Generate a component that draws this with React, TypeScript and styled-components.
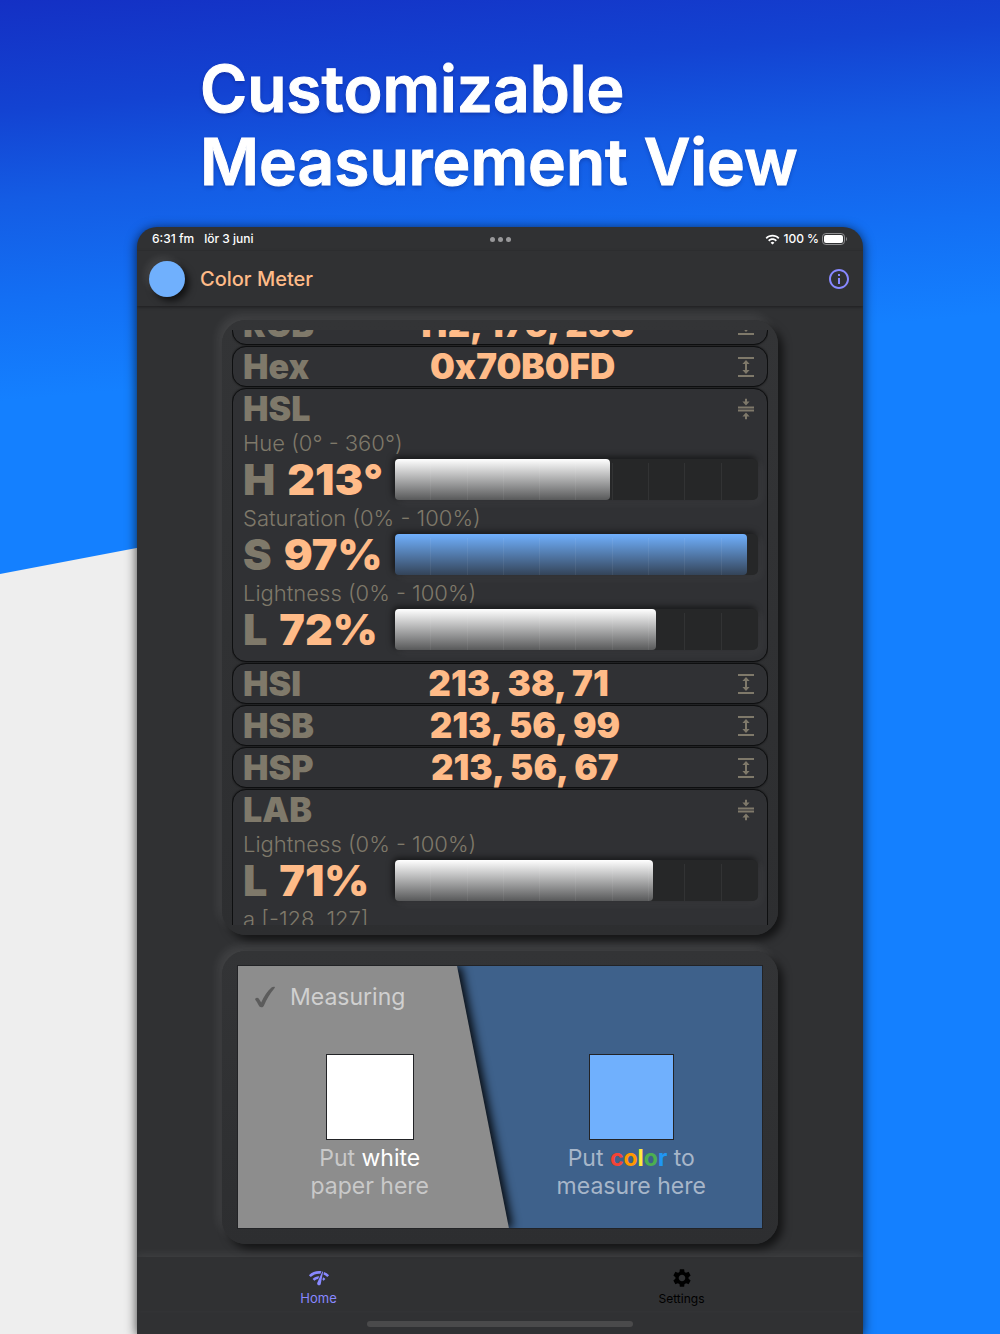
import React, { useLayoutEffect, useRef } from 'react';
import styled, { createGlobalStyle } from 'styled-components';
import { MdNetworkCheck, MdSettings, MdInfoOutline, MdWifi } from 'react-icons/md';

const c = {
  surface: '#303133',
  accent: '#ffbb88',
  muted: '#7f796a',
  violet: '#8888ff',
  sample: '#70b0fd',
};

const Global = createGlobalStyle`
  *, *::before, *::after { box-sizing: border-box; }
  body { margin: 0; font-family: Inter, "Liberation Sans", sans-serif; }
  button { font: inherit; border: 0; padding: 0; background: none; cursor: pointer; }
`;

const Page = styled.div`
  display: flex;
  flex-direction: column;
  height: 100vh;
  min-height: 1100px;
  overflow: hidden;
  position: relative;
  isolation: isolate;
  background: linear-gradient(175deg, #1430c4 0, #1343d2 110px, #145ce4 200px, #136ff4 300px, #1480ff 400px);
`;

const Slope = styled.div`
  position: absolute;
  inset: 0;
  z-index: -1;
  background: #eeeeee;
  clip-path: polygon(0 574px, 500px 479px, 500px 100%, 0 100%);
`;

const Title = styled.h1`
  width: 100%;
  max-width: 600px;
  margin: 0 auto;
  padding: 52px 0 29px;
  color: #fff;
  font-size: 64px;
  font-weight: 600;
  line-height: 73px;
  white-space: nowrap;
  -webkit-text-stroke: 1px #fff;
  text-shadow: 0 2px 4px rgba(0, 0, 60, 0.3);
`;

const Device = styled.div`
  display: flex;
  flex: 1;
  flex-direction: column;
  width: 100%;
  max-width: 726px;
  min-height: 0;
  margin: 0 auto;
  overflow: hidden;
  border-radius: 20px 20px 0 0;
  background: ${c.surface};
  box-shadow: 0 2px 12px rgba(0, 0, 0, 0.75);
`;

const StatusBar = styled.div`
  display: grid;
  grid-template-columns: 1fr auto 1fr;
  align-items: center;
  height: 24px;
  padding: 0 15px;
  color: #fff;
  font-size: 12px;
  font-weight: 500;
  line-height: 16px;
`;

const StatusGroup = styled.div<{ $end?: boolean }>`
  display: flex;
  align-items: center;
  justify-content: ${(p) => (p.$end ? 'flex-end' : 'flex-start')};
  gap: ${(p) => (p.$end ? 3 : 10)}px;
`;

const Dots = styled.div`
  display: flex;
  gap: 3px;
`;
const Dot = styled.span`
  width: 5px;
  height: 5px;
  border-radius: 50%;
  background: #98989a;
`;

const AppBar = styled.header`
  display: flex;
  align-items: center;
  gap: 15px;
  height: 55px;
  padding: 0 12px;
  box-shadow: 0 1px 3px rgba(0, 0, 0, 0.4);
`;
const Swatch = styled.div`
  width: 36px;
  height: 36px;
  border-radius: 50%;
  background: ${c.sample};
  box-shadow: 4px 4px 7px rgba(0, 0, 0, 0.65), -4px -4px 7px rgba(255, 255, 255, 0.08);
`;
const AppName = styled.h2`
  flex: 1;
  margin: 0;
  color: ${c.accent};
  font-size: 20px;
  font-weight: 500;
  line-height: 24px;
`;
const InfoButton = styled.button`
  display: flex;
  color: ${c.violet};
`;

const Main = styled.main`
  display: flex;
  flex: 1;
  flex-direction: column;
  align-items: center;
  gap: 16px;
  min-height: 0;
  padding: 14px 16px 13px;
`;

const Panel = styled.section<{ $grow?: boolean }>`
  display: flex;
  flex: ${(p) => (p.$grow ? '1 1 0' : 'none')};
  flex-direction: column;
  width: 100%;
  max-width: 556px;
  min-height: 0;
  padding: ${(p) => (p.$grow ? '10px' : '15px 16px 16px')};
  border-radius: 24px;
  background: linear-gradient(#333436, #2d2e30);
  box-shadow: 5px 5px 8px rgba(0, 0, 0, 0.6), -4px -5px 10px rgba(255, 255, 255, 0.09);
`;

const Scroller = styled.div`
  flex: 1;
  min-height: 0;
  overflow-y: auto;
  scrollbar-width: none;
`;
const List = styled.div`
  display: flex;
  flex-direction: column;
  gap: 1px;
`;

const Card = styled.article`
  flex: none;
  border: 1px solid #0e0f10;
  border-radius: 14px;
  background: #303134;
  box-shadow: 0 0 2px rgba(0, 0, 0, 0.6);
`;
const CardHead = styled.div`
  display: flex;
  align-items: center;
  height: 39px;
  padding: 0 11px 0 10px;
`;
const Name = styled.h3`
  margin: 0;
  color: ${c.muted};
  font-size: 34px;
  font-weight: 900;
  line-height: 39px;
`;
const Value = styled.div`
  flex: 1;
  color: ${c.accent};
  font-size: 35px;
  font-weight: 900;
  line-height: 39px;
  text-align: center;
  white-space: nowrap;
`;
const Toggle = styled.button`
  display: flex;
  color: ${c.muted};
`;

const Channels = styled.div`
  padding: 0 9px 8px 10px;
`;
const Caption = styled.div`
  height: 28px;
  color: ${c.muted};
  font-size: 22px;
  font-weight: 300;
  line-height: 30px;
`;
const Channel = styled.div`
  display: grid;
  grid-template-columns: 152px 1fr;
  align-items: center;
  height: 47px;
`;
const Reading = styled.div`
  display: flex;
  gap: 12px;
  color: ${c.accent};
  font-size: 43px;
  font-weight: 900;
  line-height: 47px;
  white-space: nowrap;
`;
const Letter = styled.span`
  color: ${c.muted};
`;
const Track = styled.div`
  position: relative;
  height: 41px;
  border-radius: 5px;
  background: #262728;
  box-shadow: 3px 3px 8px rgba(255, 255, 255, 0.06), -2px -2px 6px rgba(0, 0, 0, 0.6);
`;
const Fill = styled.div<{ $color: string; $end: string }>`
  height: 41px;
  border-radius: 4px;
  background: linear-gradient(${(p) => p.$color}, ${(p) => p.$end});
`;
const Ticks = styled.div`
  position: absolute;
  inset: 4px 0 0;
  display: grid;
  grid-template-columns: repeat(10, 1fr);
`;
const Tick = styled.i`
  border-right: 1px solid rgba(255, 255, 255, 0.06);
  &:last-child { border: 0; }
`;

const Stage = styled.div`
  position: relative;
  display: grid;
  grid-template-columns: 1fr 1fr;
  height: 262px;
  padding-left: 1px;
  isolation: isolate;
  overflow: hidden;
  background: #3e618b;
  outline: 1px solid #222326;
`;
const PaperShadow = styled.div`
  position: absolute;
  inset: 0;
  z-index: -1;
  filter: drop-shadow(4px 0 5px rgba(0, 0, 0, 0.9));
`;
const Paper = styled.div`
  height: 100%;
  background: #8d8d8d;
  clip-path: polygon(0 0, 41.8% 0, 51.7% 100%, 0 100%);
`;
const Half = styled.div`
  display: flex;
  flex-direction: column;
  align-items: center;
`;
const State = styled.div`
  display: flex;
  align-items: center;
  align-self: flex-start;
  gap: 14px;
  height: 62px;
  padding-left: 15px;
  color: #d0d0d0;
  font-size: 23px;
  line-height: 28px;
`;
const StateSpace = styled.div`
  height: 62px;
`;
const Sample = styled.div<{ $color: string; $width: number }>`
  width: ${(p) => p.$width}px;
  height: 86px;
  margin-top: 26px;
  border: 1px solid #222326;
  background: ${(p) => p.$color};
`;
const Hint = styled.p<{ $color: string }>`
  margin: 4px 0 0;
  color: ${(p) => p.$color};
  font-size: 23px;
  line-height: 28px;
  text-align: center;
`;
const Ink = styled.span<{ $color: string; $bold?: boolean }>`
  color: ${(p) => p.$color};
  font-weight: ${(p) => (p.$bold ? 700 : 400)};
`;

const TabBar = styled.nav`
  display: grid;
  grid-template-columns: 1fr 1fr;
  height: 54px;
  box-shadow: 0 -3px 8px rgba(255, 255, 255, 0.07);
`;
const Tab = styled.button<{ $active?: boolean }>`
  display: flex;
  flex-direction: column;
  align-items: center;
  gap: ${(p) => (p.$active ? 1 : 2)}px;
  padding-top: 10px;
  color: ${(p) => (p.$active ? c.violet : '#000')};
  font-size: ${(p) => (p.$active ? 13 : 12)}px;
  line-height: 16px;
`;
const HomeStrip = styled.div`
  height: 23px;
  padding-top: 10px;
`;
const HomeIndicator = styled.div`
  width: 266px;
  height: 6px;
  margin: 0 auto;
  border-radius: 3px;
  background: #4a4a4b;
`;

const ExpandIcon = () => (
  <svg width="20" height="22" viewBox="0 0 20 22" fill="none" stroke="currentColor" aria-hidden="true">
    <path d="M2 2h16M2 20h16" strokeWidth="2" />
    <path d="M10 7v8" strokeWidth="2" />
    <path d="M10 4l3.6 4H6.4zM10 18l3.6-4H6.4z" fill="currentColor" stroke="none" />
  </svg>
);
const CollapseIcon = () => (
  <svg width="20" height="22" viewBox="0 0 20 22" fill="none" stroke="currentColor" aria-hidden="true">
    <path d="M2 9.4h16M2 12.6h16" strokeWidth="2" />
    <path d="M10 .8v4M10 21.2v-4" strokeWidth="2" />
    <path d="M10 7.6l3.6-4H6.4zM10 14.4l3.6 4H6.4z" fill="currentColor" stroke="none" />
  </svg>
);
const BatteryIcon = () => (
  <svg width="26" height="12" viewBox="0 0 26 12" aria-hidden="true">
    <rect x="0.5" y="0.5" width="22" height="11" rx="3.4" fill="none" stroke="#8e8e90" />
    <rect x="2" y="2" width="19" height="8" rx="2" fill="#fff" />
    <path d="M24 4v4c1.3-.5 1.3-3.5 0-4z" fill="#8e8e90" />
  </svg>
);
const CheckIcon = () => (
  <svg width="22" height="22" viewBox="0 0 22 22" aria-hidden="true">
    <path
      d="M1.2 12.8c.8-1.3 2.6-1.6 3.5-.4.9 1.1 1.7 2.6 2.5 4.1C10 10.5 13.3 5 17.5 1.5c.9-.7 2.7-1 3.3-.5.3.4-.1.9-.5 1.4C15.8 7.500 12.600 13.500 10 19.500c-.6 1.400-1.300 1.800-2.600 1.800-1.500 0-2-.6-2.600-1.700-1-1.900-1.900-3.900-3.200-5.400-.4-.5-.6-1-.4-1.400z"
      fill="#5c5c5c"
    />
  </svg>
);

interface ChannelData {
  caption: string;
  letter?: string;
  reading?: string;
  percent: number;
  blue?: boolean;
}
interface Space {
  name: string;
  value?: string;
  channels?: ChannelData[];
}

const spaces: Space[] = [
  { name: 'RGB', value: '112, 176, 253' },
  { name: 'Hex', value: '0x70B0FD' },
  {
    name: 'HSL',
    channels: [
      { caption: 'Hue (0° - 360°)', letter: 'H', reading: '213°', percent: 59.2 },
      { caption: 'Saturation (0% - 100%)', letter: 'S', reading: '97%', percent: 97, blue: true },
      { caption: 'Lightness (0% - 100%)', letter: 'L', reading: '72%', percent: 72 },
    ],
  },
  { name: 'HSI', value: '213, 38, 71' },
  { name: 'HSB', value: '213, 56, 99' },
  { name: 'HSP', value: '213, 56, 67' },
  {
    name: 'LAB',
    channels: [
      { caption: 'Lightness (0% - 100%)', letter: 'L', reading: '71%', percent: 71 },
      { caption: 'a [-128, 127]', percent: 0 },
    ],
  },
];

const SpaceCard = ({ space }: { space: Space }) => (
  <Card>
    <CardHead>
      <Name>{space.name}</Name>
      <Value>{space.value}</Value>
      <Toggle aria-label={`${space.channels ? 'Collapse' : 'Expand'} ${space.name}`}>
        {space.channels ? <CollapseIcon /> : <ExpandIcon />}
      </Toggle>
    </CardHead>
    {space.channels && (
      <Channels>
        {space.channels.map((ch) => (
          <React.Fragment key={ch.caption}>
            <Caption>{ch.caption}</Caption>
            {ch.reading && (
              <Channel>
                <Reading>
                  <Letter>{ch.letter}</Letter>
                  <span>{ch.reading}</span>
                </Reading>
                <Track>
                  <Fill
                    $color={ch.blue ? c.sample : '#ffffff'}
                    $end={ch.blue ? '#344459' : '#58595a'}
                    style={{ width: `${ch.percent}%` }}
                  />
                  <Ticks>
                    {Array.from({ length: 10 }, (_, i) => (
                      <Tick key={i} />
                    ))}
                  </Ticks>
                </Track>
              </Channel>
            )}
          </React.Fragment>
        ))}
      </Channels>
    )}
  </Card>
);

const rainbow: [string, string][] = [
  ['c', '#f44336'],
  ['o', '#ff9800'],
  ['l', '#ffeb3b'],
  ['o', '#4caf50'],
  ['r', '#2196f3'],
];

export default function App() {
  const scroller = useRef<HTMLDivElement>(null);
  useLayoutEffect(() => {
    if (scroller.current) scroller.current.scrollTop = 26;
  }, []);

  return (
    <Page>
      <Global />
      <Slope />
      <Title>
        Customizable
        <br />
        Measurement View
      </Title>
      <Device>
        <StatusBar>
          <StatusGroup>
            <span>6:31 fm</span>
            <span>lör 3 juni</span>
          </StatusGroup>
          <Dots>
            <Dot />
            <Dot />
            <Dot />
          </Dots>
          <StatusGroup $end>
            <MdWifi size={15} />
            <span>100 %</span>
            <BatteryIcon />
          </StatusGroup>
        </StatusBar>
        <AppBar>
          <Swatch />
          <AppName>Color Meter</AppName>
          <InfoButton aria-label="About">
            <MdInfoOutline size={24} />
          </InfoButton>
        </AppBar>
        <Main>
          <Panel $grow>
            <Scroller ref={scroller}>
              <List>
                {spaces.map((s) => (
                  <SpaceCard key={s.name} space={s} />
                ))}
              </List>
            </Scroller>
          </Panel>
          <Panel>
            <Stage>
              <PaperShadow>
                <Paper />
              </PaperShadow>
              <Half>
                <State>
                  <CheckIcon />
                  <span>Measuring</span>
                </State>
                <Sample $color="#ffffff" $width={88} />
                <Hint $color="#c9c9c9">
                  Put <Ink $color="#ffffff">white</Ink>
                  <br />
                  paper here
                </Hint>
              </Half>
              <Half>
                <StateSpace />
                <Sample $color={c.sample} $width={85} />
                <Hint $color="#a7b6c9">
                  Put{' '}
                  {rainbow.map(([ch, color], i) => (
                    <Ink key={i} $color={color} $bold>
                      {ch}
                    </Ink>
                  ))}{' '}
                  to
                  <br />
                  measure here
                </Hint>
              </Half>
            </Stage>
          </Panel>
        </Main>
        <TabBar>
          <Tab $active>
            <MdNetworkCheck size={22} />
            Home
          </Tab>
          <Tab>
            <MdSettings size={22} />
            Settings
          </Tab>
        </TabBar>
        <HomeStrip>
          <HomeIndicator />
        </HomeStrip>
      </Device>
    </Page>
  );
}
